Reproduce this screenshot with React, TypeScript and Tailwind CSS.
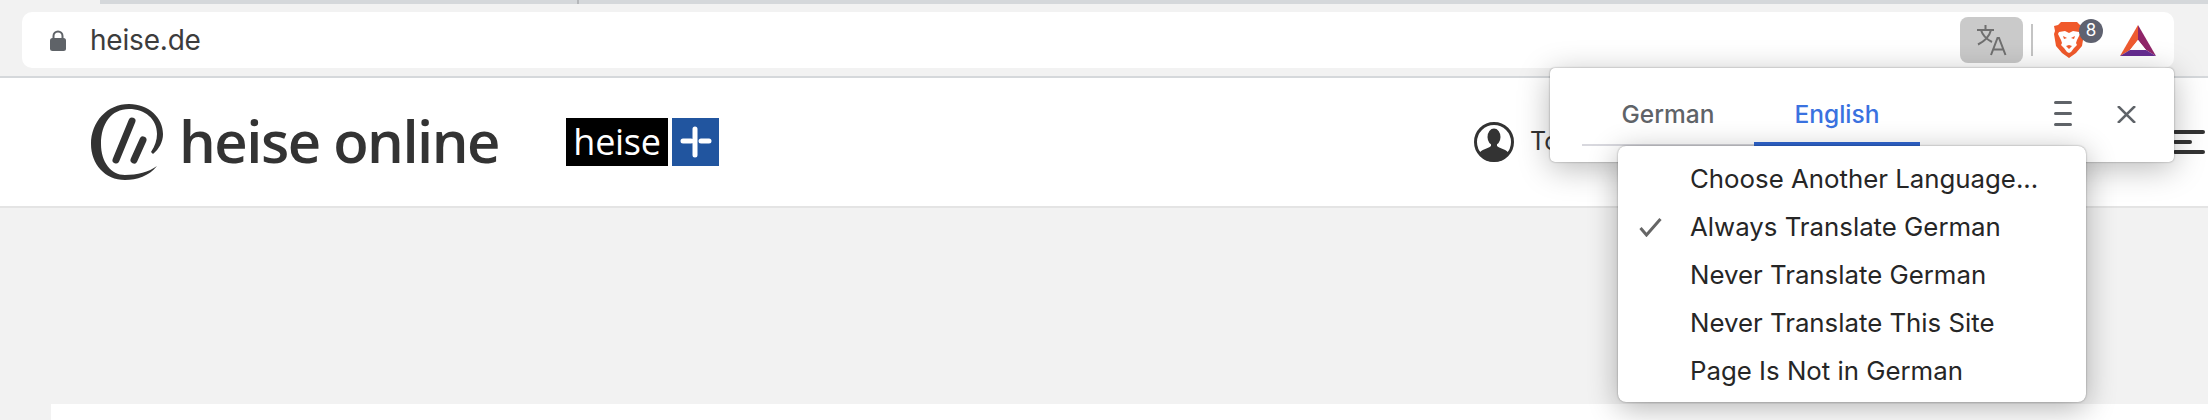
const menuItems = [
  "Choose Another Language...",
  "Always Translate German",
  "Never Translate German",
  "Never Translate This Site",
  "Page Is Not in German",
];

const TranslateIcon = () => (
  <svg width="32" height="34" viewBox="0 0 32 34" fill="none" stroke="#6f6f6f" strokeWidth="2">
    <path d="M1 7h17M9.500 2v5M15 7c-1.500 6-6 11-13 14.500M5 7c1.500 5 5 9 11 12" />
    <path d="M15 32l6.500-17h1.500l6.500 17M17 26.500h11" />
  </svg>
);

const BraveIcon = () => (
  <svg width="30" height="36" viewBox="0 0 30 36">
    <path d="M7 0h16l3 3 4 1-1 5 1 3-2 12-6 7-7 5-7-5-6-7L0 12l1-3-1-5 4-1z" fill="#f0592b" />
    <path
      d="M5 10l6-1 4 2 4-2 6 1 1 2-3 6-1 3 1 2-3 3-3 4-2 1-2-1-3-4-3-3 1-2-1-3-3-6z"
      fill="#fff"
    />
    <path d="M9 14l4 2-3 1zM21 14l-4 2 3 1zM12 24l3-1 3 1-3 3z" fill="#f0592b" />
  </svg>
);

const BatIcon = () => (
  <svg width="36" height="31" viewBox="0 0 36 31">
    <path d="M18 0L0 31l10-6 8-10z" fill="#ee5a30" />
    <path d="M18 0l18 31-10-6-8-10z" fill="#8f2468" />
    <path d="M0 31l10-6h16l10 6z" fill="#662d91" />
    <path d="M10 25l8-10 8 10z" fill="#fff" />
  </svg>
);

const HeiseLogo = () => (
  <svg width="73" height="77" viewBox="0 0 73 77" className="shrink-0">
    <path
      d="M66 62C58 72 46 76 34 76C14 76 0 60 0 40C0 18 16 0 38 0C58 0 72 14 72 30C72 38 68 45 62 50L60 48C64 42 66 36 66 30C66 15 54 5 38 5C20 5 10 20 10 40C10 58 20 71 34 71C46 71 58 68 66 62Z"
      fill="#333333"
    />
    <path d="M41 17L25 56M52 36L43 56" stroke="#333333" strokeWidth="7" strokeLinecap="round" />
  </svg>
);

const UserIcon = () => (
  <svg width="40" height="40" viewBox="0 0 40 40" className="shrink-0">
    <circle cx="20" cy="20" r="18.500" fill="#fff" stroke="#333333" strokeWidth="3" />
    <ellipse cx="20" cy="15" rx="6.500" ry="8.500" fill="#333333" />
    <path
      d="M5 32c2-5 9-5 12-8v-4h6v4c3 3 10 3 12 8a18.500 18.500 0 0 1-30 0z"
      fill="#333333"
    />
  </svg>
);

export default function App() {
  return (
    <div className="relative h-[420px] w-[2208px] overflow-hidden bg-[#f2f2f2] font-['Inter',sans-serif]">
      {/* browser toolbar */}
      <div className="h-[76px] bg-[#f2f2f2]">
        <div className="ml-[100px] flex h-1 bg-[#d5d8db]">
          <div className="ml-[477px] h-1 w-0.5 bg-[#b5b7ba]" />
        </div>
        <div className="ml-[22px] mr-[34px] mt-2 flex h-14 items-center rounded-[10px] bg-white pl-7 pr-[18px]">
          <svg width="16" height="21" viewBox="0 0 16 21" className="shrink-0">
            <path d="M3.500 9V6a4.500 4.500 0 0 1 9 0v3" fill="none" stroke="#5f6368" strokeWidth="2" />
            <rect x="0" y="8" width="16" height="13" rx="2.500" fill="#5f6368" />
          </svg>
          <span className="ml-6 text-[28px] leading-none tracking-[-0.2px] text-[#3c3c3c]">heise.de</span>
          <div className="ml-auto flex items-center">
            <div className="flex h-[46px] w-[63px] items-center justify-center rounded-lg bg-[#cacaca]">
              <TranslateIcon />
            </div>
            <div className="ml-2 h-8 w-0.5 bg-[#c4c4c4]" />
            <div className="relative ml-[21px] flex h-[46px] w-[66px] items-center">
              <BraveIcon />
              <span className="absolute left-[25px] top-0.5 flex h-6 w-6 items-center justify-center rounded-full bg-[#5f6270] text-[17px] text-white">
                8
              </span>
            </div>
            <BatIcon />
          </div>
        </div>
      </div>

      {/* page header */}
      <div className="flex h-[132px] items-center border-y-2 border-t-[#d5d8db] border-b-[#e4e4e4] bg-white pl-[91px]">
        <HeiseLogo />
        <span className="ml-[15px] -mt-0.5 w-[319px] whitespace-nowrap font-['Open_Sans',sans-serif] text-[58px] leading-none font-semibold tracking-[-1.500px] text-[#333333]">
          heise online
        </span>
        <div className="ml-[68px] flex h-12 gap-1">
          <div className="flex w-[102px] items-center justify-center bg-black font-['Open_Sans',sans-serif] text-[36px] font-medium tracking-[-0.3px] text-white">
            heise
          </div>
          <div className="flex w-[47px] items-center justify-center bg-[#21559f]">
            <svg width="32" height="32" viewBox="0 0 32 32" stroke="#fff" strokeWidth="5" strokeLinecap="round">
              <path d="M15 3v26M3 15h8M21 15h8" />
            </svg>
          </div>
        </div>
        <div className="ml-[755px] flex w-[86px] items-center">
          <UserIcon />
          <span className="ml-4 text-[25px] text-[#333333]">To</span>
        </div>
        <div className="ml-[613px] flex flex-col gap-1.5">
          <div className="h-1 w-8 rounded-full bg-[#333333]" />
          <div className="h-1 w-[19px] rounded-full bg-[#333333]" />
          <div className="h-1 w-8 rounded-full bg-[#333333]" />
        </div>
      </div>

      {/* page body */}
      <div className="ml-[51px] mt-[196px] h-4 bg-white" />

      {/* translate bubble */}
      <div className="absolute left-[1550px] top-[68px] h-[94px] w-[624px] rounded-[5px] bg-white shadow-[0_6px_32px_rgba(0,0,0,0.28),0_0_2px_rgba(0,0,0,0.4)]">
        <div className="ml-8 flex h-[78px] w-[338px] items-end border-b-2 border-[#d8d8de]">
          <div className="-mb-0.5 flex h-[46px] w-[172px] justify-center">
            <span className="text-[24.500px] leading-[28px] font-medium text-[#5f6368]">German</span>
          </div>
          <div className="-mb-0.5 flex h-[46px] w-[166px] justify-center border-b-4 border-[#2f65cf]">
            <span className="text-[24.500px] leading-[28px] font-medium text-[#3a72e0]">English</span>
          </div>
        </div>
        <div className="absolute left-[504px] top-[33px] flex h-[25px] w-[18px] flex-col justify-between">
          <div className="h-[3px] rounded-full bg-[#5f6368]" />
          <div className="h-[3px] rounded-full bg-[#5f6368]" />
          <div className="h-[3px] rounded-full bg-[#5f6368]" />
        </div>
        <svg
          className="absolute left-[567px] top-[38px]"
          width="19"
          height="17"
          viewBox="0 0 19 17"
          stroke="#5f6368"
          strokeWidth="2.500"
        >
          <path d="M1 0l17 17M18 0L1 17" />
        </svg>
      </div>

      {/* options menu */}
      <div className="absolute left-[1618px] top-[146px] flex h-[256px] w-[468px] flex-col justify-center rounded-lg bg-white pt-0.5 shadow-[0_6px_30px_rgba(0,0,0,0.3),0_0_2px_rgba(0,0,0,0.4)]">
        {menuItems.map((item) => (
          <div key={item} className="relative flex h-12 items-center pl-[72px] text-[25.800px] text-[#262626]">
            {item === "Always Translate German" && (
              <svg
                className="absolute left-[21px] top-[15px]"
                width="23"
                height="19"
                viewBox="0 0 23 19"
                fill="none"
                stroke="#666666"
                strokeWidth="3"
              >
                <path d="M1.500 10l6 7L21.500 1" />
              </svg>
            )}
            {item}
          </div>
        ))}
      </div>
    </div>
  );
}
